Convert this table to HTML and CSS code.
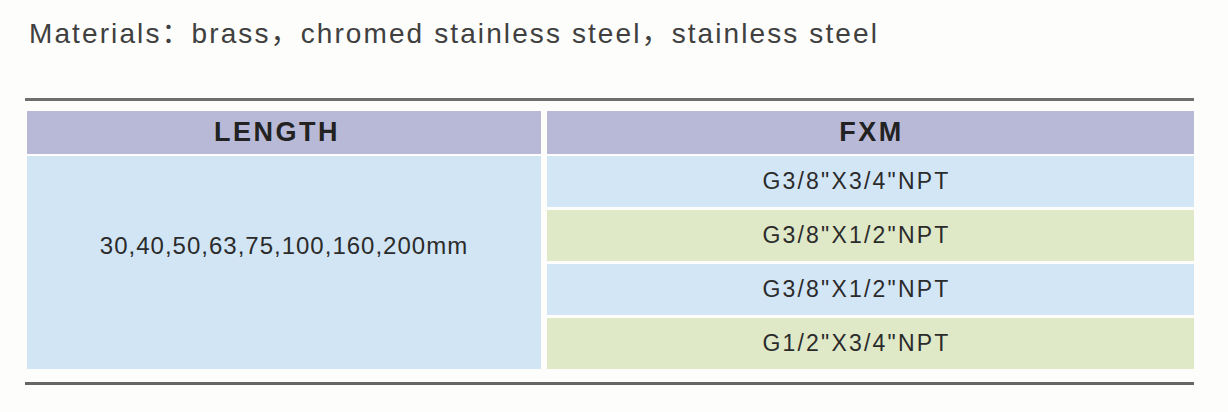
FILE: index.html
```html
<!DOCTYPE html>
<html lang="en">
<head>
    <meta charset="UTF-8">
    <meta name="viewport" content="width=device-width, initial-scale=1.0">
    <title>FXM Fittings</title>
    <link rel="stylesheet" href="styles.css">
</head>
<body>

<div class="page">
    <p class="materials">Materials：brass，chromed stainless steel，stainless steel</p>

    <div class="spec">
        <!-- Header row -->
        <div class="spec-head">
            <div class="head-cell length-head">LENGTH</div>
            <div class="head-cell">FXM</div>
        </div>

        <!-- Body: one length cell beside the thread rows -->
        <div class="spec-body">
            <div class="length-cell">30,40,50,63,75,100,160,200mm</div>
            <div class="thread-list">
                <div class="thread-row blue">G3/8"X3/4"NPT</div>
                <div class="thread-row green">G3/8"X1/2"NPT</div>
                <div class="thread-row blue">G3/8"X1/2"NPT</div>
                <div class="thread-row green">G1/2"X3/4"NPT</div>
            </div>
        </div>
    </div>
</div>

</body>
</html>
```

FILE: styles.css
```css
body {
    margin: 0;
    padding: 0;
    background-color: #fdfdfb;
    font-family: "Liberation Sans", "Noto Sans CJK SC", Arial, sans-serif;
    color: #333;
}
.page {
    padding: 18px 34px 0 25px;
}
.materials {
    margin: 0 0 0 4px;
    font-size: 28px;
    line-height: 32px;
    letter-spacing: 2.1px;
    color: #404040;
}
.spec {
    margin-top: 48px;
    padding: 10px 0 13px 2px;
    border-top: 3px solid #6f6f6f;
    border-bottom: 3px solid #666;
}
.spec-head,
.spec-body {
    display: grid;
    grid-template-columns: 514px 1fr;
    column-gap: 6px;
}
.spec-head {
    margin-bottom: 2px;
}
.head-cell {
    height: 43px;
    display: flex;
    align-items: center;
    justify-content: center;
    padding-left: 2px;
    background-color: #b8b9d7;
    font-size: 27px;
    font-weight: bold;
    letter-spacing: 2.5px;
    color: #222;
}
.length-head {
    padding: 0 14px 0 0;
}
.length-cell {
    display: flex;
    align-items: center;
    justify-content: center;
    padding-bottom: 34px;
    background-color: #d2e5f5;
    font-size: 24px;
    letter-spacing: 1px;
    color: #2b2b2b;
}
.thread-list {
    display: flex;
    flex-direction: column;
    gap: 3px;
}
.thread-row {
    height: 51px;
    display: flex;
    align-items: center;
    justify-content: center;
    padding-right: 28px;
    font-size: 23px;
    letter-spacing: 2.2px;
    color: #2b2b2b;
}
.thread-row.blue {
    background-color: #d3e6f6;
}
.thread-row.green {
    background-color: #dfe8c7;
}
```
